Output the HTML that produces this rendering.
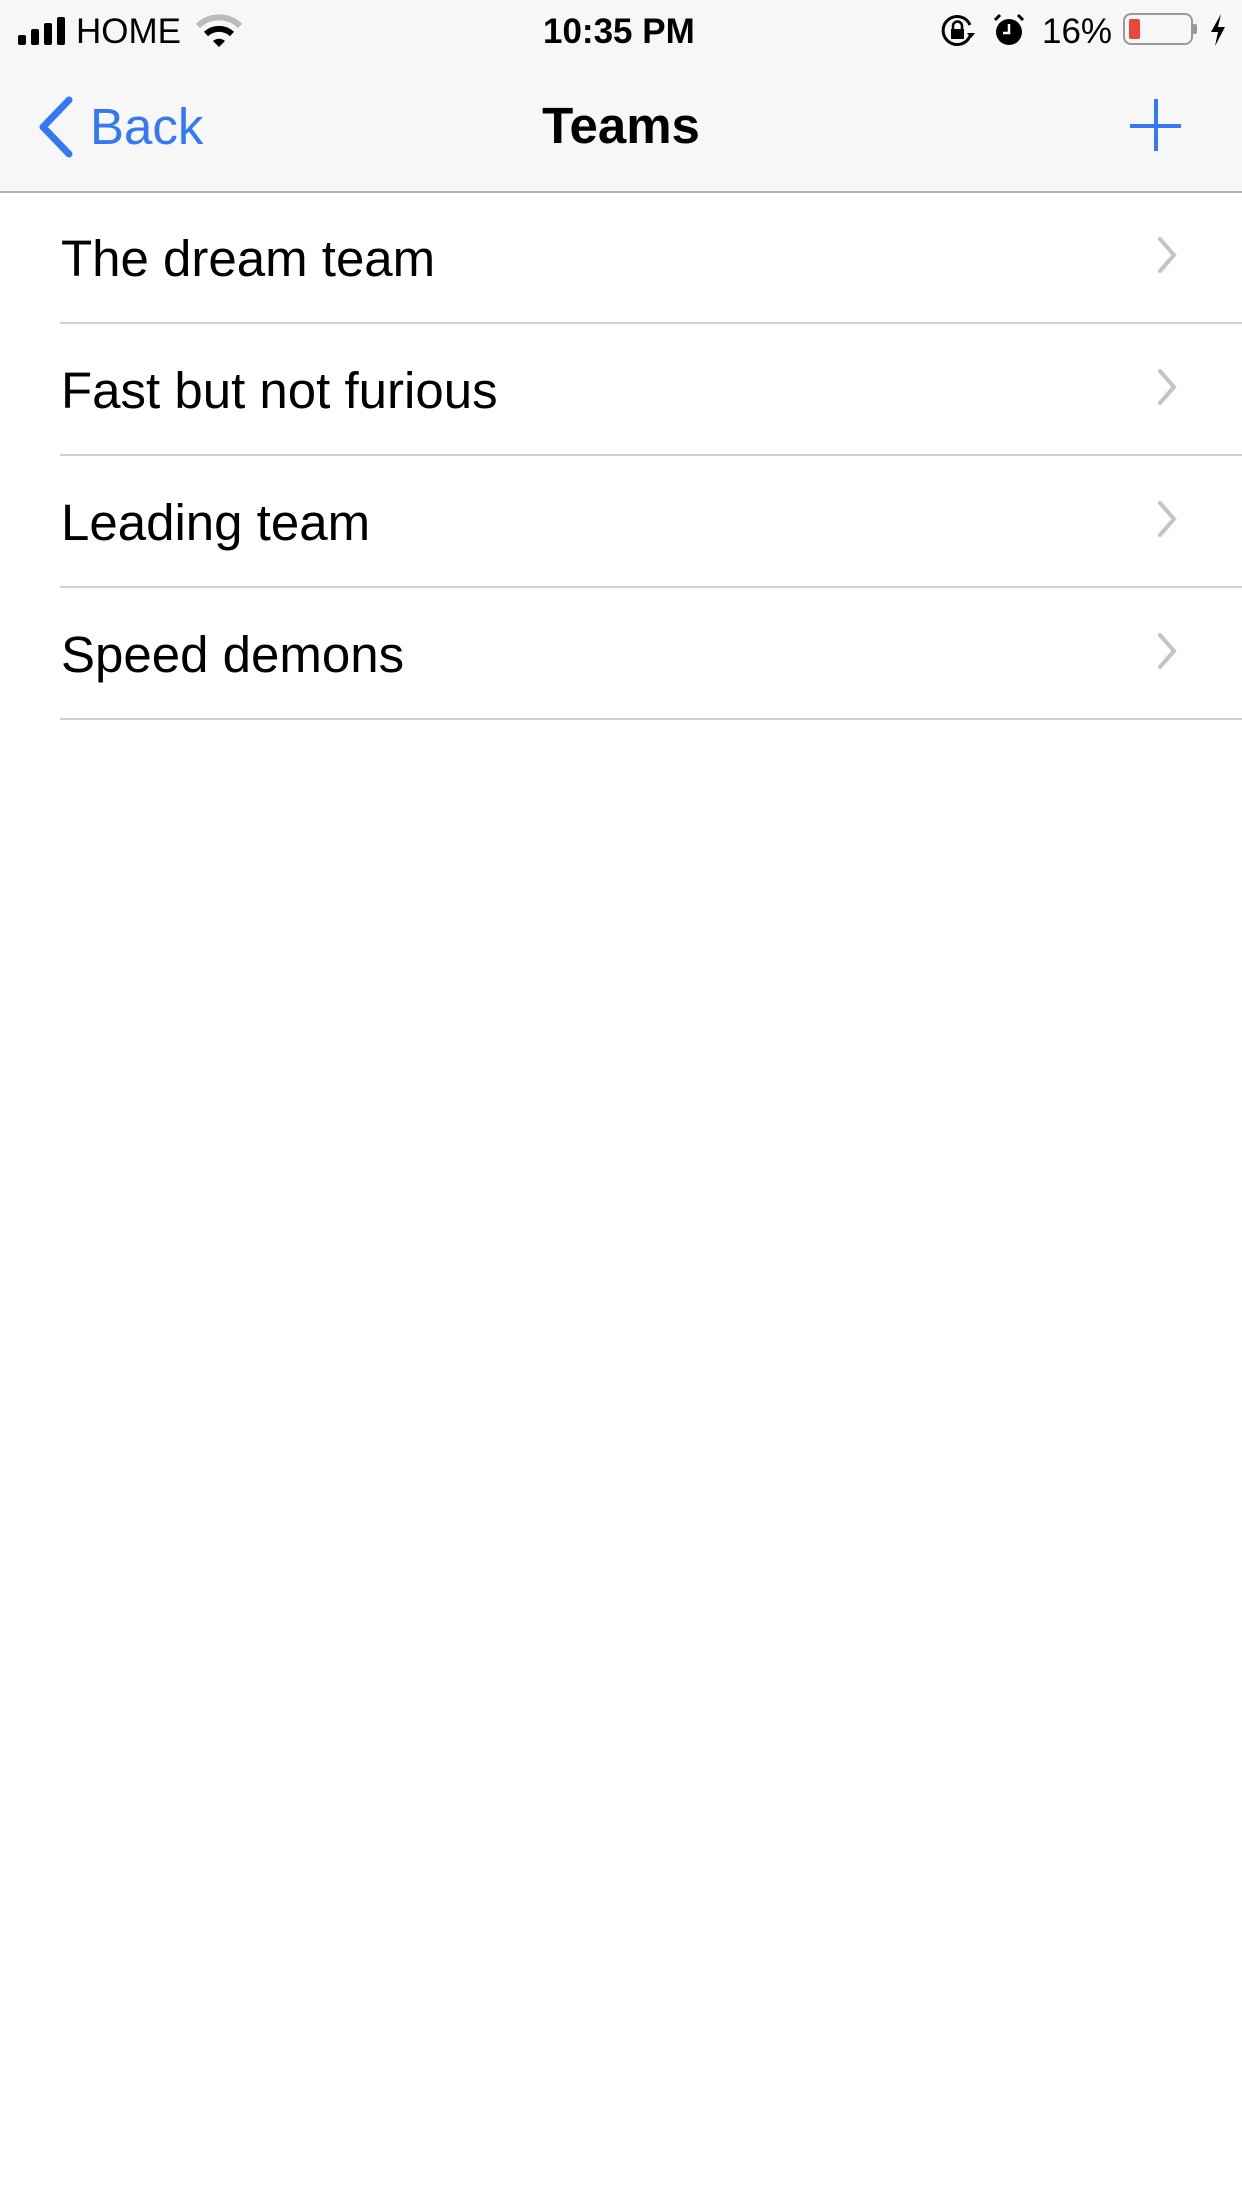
<!DOCTYPE html>
<html><head><meta charset="utf-8"><style>
html,body{margin:0;padding:0;width:1242px;height:2208px;background:#fff;overflow:hidden;font-family:"Liberation Sans",sans-serif;}
.top{position:absolute;left:0;top:0;width:1242px;height:191px;background:#f7f7f7;border-bottom:2px solid #b2b2b2;}
.st{position:absolute;top:9px;font-size:35px;line-height:46px;color:#000;}
.row{position:absolute;left:0;width:1242px;height:132px;}
.row .t{position:absolute;left:61px;top:3px;line-height:128px;font-size:51px;color:#000;}
.row .sep{position:absolute;left:60px;right:0;bottom:0;height:2px;background:#d2d2d6;}
.row svg{position:absolute;left:1155px;top:43px;}
</style></head><body>
<div class="top">
  <svg style="position:absolute;left:18px;top:17px" width="50" height="28"><rect x="0" y="18" width="8" height="10" rx="2"/><rect x="13" y="12" width="8" height="16" rx="2"/><rect x="26" y="6" width="8" height="22" rx="2"/><rect x="39" y="0" width="8" height="28" rx="2"/></svg>
  <div class="st" style="left:76px">HOME</div>
  <svg style="position:absolute;left:196px;top:14px" width="46" height="34" viewBox="0 0 46 34"><path d="M2 12 A30 30 0 0 1 44 12" stroke="#bbb" stroke-width="6" fill="none"/><path d="M10 20 A19 19 0 0 1 36 20" stroke="#000" stroke-width="6" fill="none"/><path d="M17 27 L23 33 L29 27 A9 9 0 0 0 17 27Z" fill="#000"/></svg>
  <div class="st" style="left:543px;font-weight:bold;">10:35 PM</div>
  <svg style="position:absolute;left:940px;top:14px" width="36" height="34" viewBox="0 0 36 34"><path d="M30 22 A14 14 0 1 1 30 11" stroke="#000" stroke-width="3" fill="none"/><path d="M27 19 l4 5 l4 -5z" fill="#000"/><rect x="11" y="15" width="13" height="10" fill="#000"/><path d="M13 15 v-3 a4.5 4.5 0 0 1 9 0 v3" stroke="#000" stroke-width="2.5" fill="none"/></svg>
  <svg style="position:absolute;left:993px;top:13px" width="32" height="34" viewBox="0 0 32 34"><circle cx="16" cy="19" r="13" fill="#000"/><path d="M16 11 v9 h-6" stroke="#fff" stroke-width="2.5" fill="none"/><path d="M2 7 l5 -5 M30 7 l-5 -5" stroke="#000" stroke-width="3"/></svg>
  <div class="st" style="left:1042px">16%</div>
  <div style="position:absolute;left:1123px;top:13px;width:66px;height:28px;border:2px solid #999;border-radius:8px;"></div>
  <div style="position:absolute;left:1129px;top:19px;width:11px;height:20px;background:#e9473a;border-radius:2px;"></div>
  <div style="position:absolute;left:1193px;top:24px;width:4px;height:10px;background:#999;border-radius:0 2px 2px 0;"></div>
  <svg style="position:absolute;left:1209px;top:14px" width="18" height="32" viewBox="0 0 18 32"><path d="M12 0 L2 18 H9 L6 32 L16 13 H9 Z" fill="#000"/></svg>
  <svg style="position:absolute;left:36px;top:96px" width="40" height="62" viewBox="0 0 40 62"><path d="M33 4 L7 31 L33 58" stroke="#3478f6" stroke-width="7" stroke-linecap="round" stroke-linejoin="round" fill="none"/></svg>
  <div style="position:absolute;left:90px;top:98px;font-size:51px;line-height:58px;color:#3478f6;">Back</div>
  <div style="position:absolute;left:0;width:1242px;top:97px;text-align:center;font-size:51px;line-height:58px;font-weight:bold;color:#000;">Teams</div>
  <div style="position:absolute;left:1130px;top:124px;width:51px;height:4px;background:#3478f6;"></div>
  <div style="position:absolute;left:1154px;top:99px;width:4px;height:52px;background:#3478f6;"></div>
</div>
<div class="row" style="top:192px"><div class="t">The dream team</div><div class="sep"></div><svg width="26" height="40" viewBox="0 0 26 40"><path d="M5 4 L19 20 L5 36" stroke="#c4c4c8" stroke-width="4" fill="none" stroke-linecap="round"/></svg></div>
<div class="row" style="top:324px"><div class="t">Fast but not furious</div><div class="sep"></div><svg width="26" height="40" viewBox="0 0 26 40"><path d="M5 4 L19 20 L5 36" stroke="#c4c4c8" stroke-width="4" fill="none" stroke-linecap="round"/></svg></div>
<div class="row" style="top:456px"><div class="t">Leading team</div><div class="sep"></div><svg width="26" height="40" viewBox="0 0 26 40"><path d="M5 4 L19 20 L5 36" stroke="#c4c4c8" stroke-width="4" fill="none" stroke-linecap="round"/></svg></div>
<div class="row" style="top:588px"><div class="t">Speed demons</div><div class="sep"></div><svg width="26" height="40" viewBox="0 0 26 40"><path d="M5 4 L19 20 L5 36" stroke="#c4c4c8" stroke-width="4" fill="none" stroke-linecap="round"/></svg></div>
</body></html>
